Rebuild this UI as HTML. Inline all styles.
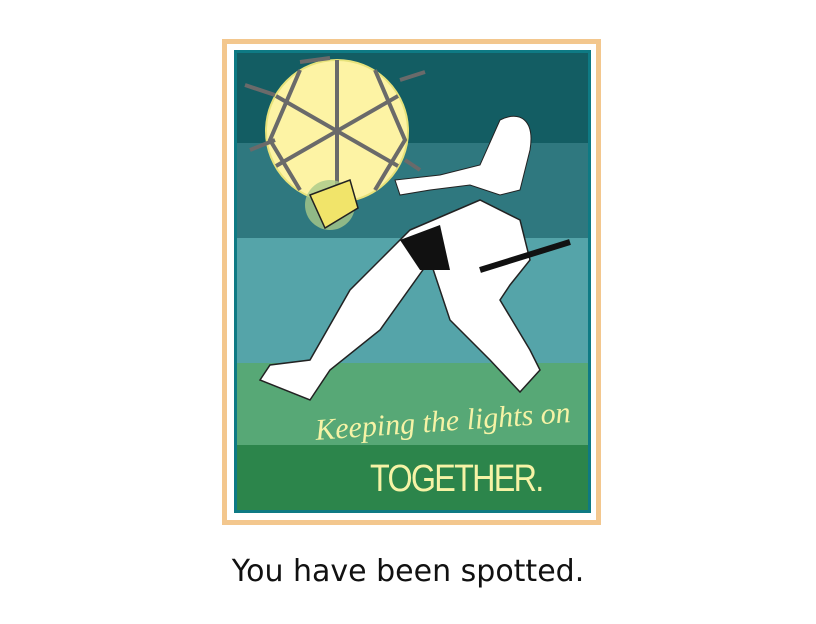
<!DOCTYPE html>
<html><head><meta charset="utf-8"><style>
body{margin:0;width:816px;height:624px;background:#fff;position:relative;overflow:hidden}
.o{position:absolute;left:222px;top:39px;width:369px;height:476px;border:5px solid #f3c78e;background:#fff}
.t{position:absolute;left:234px;top:50px;width:351px;height:457px;border:3px solid #0e7a84}
.b{position:absolute;left:237px;width:351px}
.cap{position:absolute;top:554px;left:0;width:816px;text-align:center;font:30px "DejaVu Sans",sans-serif;color:#111}
svg{position:absolute;left:0;top:0}
</style></head><body>
<div class="o"></div><div class="t"></div>
<div class="b" style="top:53px;height:90px;background:#135d63"></div>
<div class="b" style="top:143px;height:95px;background:#2f787f"></div>
<div class="b" style="top:238px;height:125px;background:#55a4a9"></div>
<div class="b" style="top:363px;height:82px;background:#57a876"></div>
<div class="b" style="top:445px;height:65px;background:#2c854b"></div>
<svg width="816" height="624">
<circle cx="337" cy="131" r="71" fill="#fdf3a4" stroke="#e7e27a" stroke-width="2"/>
<g stroke="#6a6a6a" stroke-width="4" fill="none">
<path d="M337 60V200M276 96L398 166M276 166L398 96M300 70L270 140 300 190M375 70L405 140 375 190"/>
<path d="M245 85L275 95M250 150L275 140M300 62L330 58M400 80L425 72M405 160L420 170"/>
</g>
<circle cx="330" cy="205" r="25" fill="#a9c98a" opacity=".8"/>
<path d="M310 195L350 180 358 208 325 228Z" fill="#f1e46a" stroke="#222" stroke-width="1.5"/>
<path d="M500 120C520 110 535 120 530 150L520 190 500 195 470 185 430 190 400 195 395 180 440 175 480 165Z" fill="#fff" stroke="#222"/>
<path d="M410 230L480 200 520 220 530 260 510 285 500 300 530 350 540 370 520 392 490 360 450 320 430 260 380 330 330 370 310 400 260 380 270 365 310 360 350 290Z" fill="#fff" stroke="#222" stroke-width="1.5"/>
<path d="M400 240L440 225 450 270 420 270Z" fill="#111"/>
<path d="M480 270L570 242" stroke="#111" stroke-width="6"/>
</svg>
<div style="position:absolute;left:315px;top:405px;font:italic 30px 'Liberation Serif',serif;color:#f6f3a6;transform:rotate(-4deg)">Keeping the lights on</div>
<div style="position:absolute;left:370px;top:458px;font:38px 'Liberation Sans',sans-serif;color:#f6f3a6;letter-spacing:-2px;transform:scaleX(.85);transform-origin:left">TOGETHER.</div>
<div class="cap">You have been spotted.</div>
</body></html>
